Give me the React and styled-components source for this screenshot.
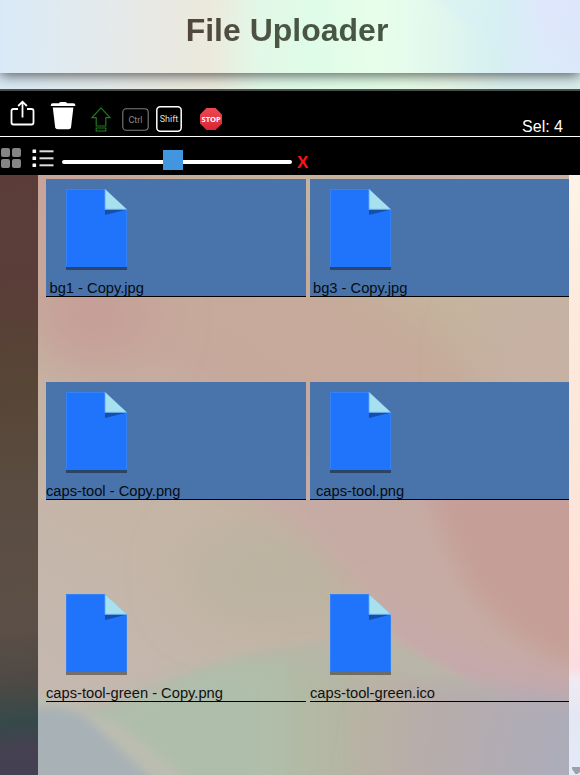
import React from "react";
import styled, { createGlobalStyle } from "styled-components";

const GlobalStyle = createGlobalStyle`
  * { box-sizing: border-box; }
  body {
    margin: 0;
    overflow: hidden;
    font-family: "Liberation Sans", Arial, sans-serif;
  }
`;

const Page = styled.div`
  display: flex;
  flex-direction: column;
  width: 580px;
  height: 775px;
  overflow: hidden;
  background: linear-gradient(94deg, #d9eaf7 0%, #e3eaec 17%, #e8e9e4 27%, #ece9dc 37%, #e0f9e9 46%, #dffde8 57%, #e4fde6 70%, #e6f6e6 77%, #d9f0ee 87%, #dbeeee 100%) 0 0 / 100% 91px no-repeat;
`;

const Header = styled.header`
  flex: none;
  height: 73px;
  margin-bottom: 16px;
  box-shadow: 0 2px 13px rgba(0, 0, 0, 0.66);
  clip-path: inset(0 0 -16px 0);
  background:
    linear-gradient(37deg, transparent 50%, rgba(214, 239, 245, 0.5) 56%, transparent 85%) 370px 0 / 210px 73px no-repeat,
    linear-gradient(92deg, #d9eaf7 0%, #e3eaec 16%, #e8e9e5 26%, #ece9dc 36%, #e3f7e7 44%, #defce8 54%, #e8feea 66%, #e1f7ee 76%, #d5eff2 86%, #dfe7fb 93%, #dce6fb 100%);
`;

const Title = styled.h1`
  margin: 0;
  padding-right: 6px;
  text-align: center;
  font-size: 32px;
  line-height: 60px;
  color: transparent;
  background: linear-gradient(90deg, #52463c 32%, #4b5543 48%, #455744 66%);
  background-clip: text;
`;

const Toolbar = styled.div`
  flex: none;
  display: flex;
  height: 48px;
  border-top: 2px solid #49504c;
  border-bottom: 1px solid #fff;
  background: #000;
`;

const ToolIcon = styled.svg`
  flex: none;
  display: block;
  width: ${(p) => p.$w}px;
  height: ${(p) => p.$h}px;
  margin: ${(p) => p.$top}px 0 0 ${(p) => p.$left}px;
`;

const Selection = styled.div`
  margin: 26px 17px 0 auto;
  font-size: 16px;
  line-height: 19px;
  color: #fff;
`;

const ViewBar = styled.div`
  flex: none;
  display: flex;
  height: 38px;
  background: #000;
`;

const Slider = styled.div`
  display: flex;
  align-items: center;
  width: 230px;
  height: 4px;
  margin: 23px 0 0 8px;
  padding-left: 101px;
  border-radius: 2px;
  background: #fff;
`;

const Thumb = styled.div`
  flex: none;
  width: 20px;
  height: 20px;
  margin: -10px 0;
  transform: translateY(-2px);
  background: #4196df;
`;

const Clear = styled.div`
  margin: 14px 0 0 5px;
  font: bold 17px/24px "Liberation Sans", Arial, sans-serif;
  color: #ff1212;
`;

const Workspace = styled.div`
  flex: none;
  display: flex;
  height: 600px;
`;

const Sidebar = styled.aside`
  width: 38px;
  background: linear-gradient(174deg, #5b3c39 0%, #5a3d38 18%, #574536 34%, #5a4c41 53%, #5c4f47 75%, #4e4945 84%, #36494a 91%, #454151 95%, #454052 100%);
`;

const FileArea = styled.main`
  position: relative;
  width: 531px;
  overflow: hidden;
  padding: 4px 0 0 8px;
`;

const Wallpaper = styled.svg`
  position: absolute;
  inset: 0;
  width: 531px;
  height: 600px;
`;

const FileGrid = styled.div`
  position: relative;
  display: grid;
  grid-template-columns: 260px 259px;
  grid-auto-rows: 202.67px;
  column-gap: 4px;
  align-items: start;
`;

const FileTile = styled.div`
  display: flex;
  flex-direction: column;
  height: 118px;
  padding-top: 10px;
  border-bottom: 1px solid #000;
  background: ${(p) => (p.$selected ? "#4874ab" : "transparent")};
`;

const FileGlyph = styled.svg`
  flex: none;
  display: block;
  width: 61px;
  height: 81px;
  margin-left: 20px;
`;

const FileName = styled.div`
  margin-top: 10px;
  padding-left: ${(p) => p.$indent}px;
  font-size: 14.7px;
  line-height: 17px;
  white-space: nowrap;
  color: ${(p) => (p.$selected ? "#050b14" : "#111")};
`;

const ScrollTrack = styled.div`
  display: flex;
  flex-direction: column;
  justify-content: flex-end;
  align-items: flex-end;
  width: 11px;
  padding-bottom: 1px;
  background: linear-gradient(180deg, #fef3e7 0%, #fdeadd 22%, #fbe6d8 50%, #ffe3d9 65%, #ffdede 77%, #fbdde0 82%, #f0eaf2 84%, #e4e8f4 90%, #e2e9f7 100%);
`;

const ScrollArrow = styled.svg`
  display: block;
  width: 8px;
  height: 7px;
`;

const files = [
  { name: "bg1 - Copy.jpg", selected: true, indent: 3.5 },
  { name: "bg3 - Copy.jpg", selected: true, indent: 3 },
  { name: "caps-tool - Copy.png", selected: true, indent: 0 },
  { name: "caps-tool.png", selected: true, indent: 6 },
  { name: "caps-tool-green - Copy.png", selected: false, indent: 0 },
  { name: "caps-tool-green.ico", selected: false, indent: 0 },
];

function ShareIcon() {
  return (
    <ToolIcon $w={26} $h={28} $left={9} $top={9} viewBox="0 0 26 28" fill="none" stroke="#fff">
      <path d="M9 9H4.5Q2.5 9 2.5 11V22.5Q2.5 24.5 4.5 24.5H22.5Q24.5 24.5 24.5 22.5V11Q24.5 9 22.5 9H18" strokeWidth="1.8" />
      <path d="M13.5 17.5V2.2M9.2 6L13.5 1.7L17.8 6" strokeWidth="1.8" />
    </ToolIcon>
  );
}

function TrashIcon() {
  return (
    <ToolIcon $w={26} $h={29} $left={15} $top={10} viewBox="0 0 26 29" fill="#fff">
      <path d="M.9 5V3.3Q1.3 2.4 3 2.2H9Q9.2 1 10.5.9H15.5Q16.8 1 17 2.2H23Q24.8 2.4 25.2 3.3V5Z" />
      <path d="M2.8 6.6H23.4L21 26.4Q20.7 28.2 18.7 28.2H7.6Q5.6 28.2 5.2 26.4Z" />
    </ToolIcon>
  );
}

function UpArrowIcon() {
  return (
    <ToolIcon $w={21} $h={26} $left={15} $top={15} viewBox="0 0 21 26" fill="none" stroke="#1d7b1d" strokeWidth="1.2">
      <path d="M10 1.8L19 11.6H14.8V20H5.2V11.6H1Z" />
      <path d="M5.2 22H14.8V25H5.2Z" />
    </ToolIcon>
  );
}

function KeyIcon({ label, color, stroke, size, left, top, w, h, text, textWidth }) {
  return (
    <ToolIcon $w={w} $h={h} $left={left} $top={top} viewBox={`0 0 ${w} ${h}`}>
      <rect x=".8" y=".8" width={w - 1.6} height={h - 1.6} rx="3.5" fill="none" stroke={color} strokeWidth={stroke} />
      <text
        x={w / 2}
        y={h / 2 + size * 0.35}
        textAnchor="middle"
        textLength={textWidth}
        lengthAdjust="spacingAndGlyphs"
        fontFamily="Roboto, sans-serif"
        fontSize={size}
        fill={text}
      >
        {label}
      </text>
    </ToolIcon>
  );
}

function StopIcon() {
  return (
    <ToolIcon $w={22} $h={22} $left={18} $top={17} viewBox="0 0 22 22">
      <defs>
        <linearGradient id="stopFill" x1="0" y1="0" x2="0" y2="1">
          <stop offset="0" stopColor="#ee4854" />
          <stop offset="1" stopColor="#d92433" />
        </linearGradient>
      </defs>
      <path d="M6.5 0H15.5L22 6.5V15.5L15.5 22H6.5L0 15.5V6.5Z" fill="url(#stopFill)" />
      <text x="11.2" y="13.7" textAnchor="middle" textLength="19.4" lengthAdjust="spacingAndGlyphs" fontFamily="Open Sans, sans-serif" fontWeight="700" fontSize="7.8" fill="#fff">
        STOP
      </text>
    </ToolIcon>
  );
}

function GridIcon() {
  return (
    <ToolIcon $w={20} $h={20} $left={1} $top={11} viewBox="0 0 20 20" fill="#858585">
      <rect x="0" y="0" width="9" height="9" rx="2" />
      <rect x="11" y="0" width="9" height="9" rx="2" />
      <rect x="0" y="11" width="9" height="9" rx="2" />
      <rect x="11" y="11" width="9" height="9" rx="2" />
    </ToolIcon>
  );
}

function ListIcon() {
  return (
    <ToolIcon $w={22} $h={19} $left={11} $top={11.5} viewBox="0 0 22 19" fill="#fff">
      {[0.5, 7.5, 14.5].map((y) => (
        <g key={y}>
          <rect x=".5" y={y} width="3.6" height="3.6" rx=".5" />
          <rect x="7.5" y={y + 0.8} width="14" height="2" fill="#ddd" />
        </g>
      ))}
    </ToolIcon>
  );
}

function FileIcon() {
  return (
    <FileGlyph viewBox="0 0 61 81">
      <path d="M0 78H61V81H0Z" fill="#000" fillOpacity=".4" />
      <path d="M0 0H39L61 21V78H0Z" fill="#2074fc" />
      <path d="M.5 77.5V.5H39M60.5 21V77.5" fill="none" stroke="#3c88f5" strokeWidth=".7" />
      <path d="M39 20.5H61L39 26Z" fill="#154fa7" />
      <path d="M39 0L61 20.5H39Z" fill="#a7e1f0" />
      <path d="M39 0V20.3H60.5" fill="none" stroke="#5daaf0" strokeWidth=".8" />
    </FileGlyph>
  );
}

function AbstractWallpaper() {
  return (
    <Wallpaper viewBox="0 0 531 600" preserveAspectRatio="none">
      <defs>
        <linearGradient id="base" gradientUnits="userSpaceOnUse" x1="60" y1="560" x2="420" y2="0">
          <stop offset="0" stopColor="#c4b8b0" />
          <stop offset=".2" stopColor="#c4b6aa" />
          <stop offset=".38" stopColor="#c5b4a4" />
          <stop offset=".55" stopColor="#c6a99c" />
          <stop offset=".74" stopColor="#c6aa9a" />
          <stop offset=".83" stopColor="#c5b49d" />
          <stop offset="1" stopColor="#c6b2a6" />
        </linearGradient>
        <linearGradient id="greenFade" gradientUnits="userSpaceOnUse" x1="60" y1="0" x2="430" y2="0">
          <stop offset="0" stopColor="#b0bcae" />
          <stop offset=".35" stopColor="#afbeaa" />
          <stop offset=".6" stopColor="#b3b8a4" />
          <stop offset=".8" stopColor="#bab0a4" />
          <stop offset="1" stopColor="#b4abae" />
        </linearGradient>
        <linearGradient id="lavender" gradientUnits="userSpaceOnUse" x1="320" y1="530" x2="520" y2="570">
          <stop offset="0" stopColor="#bbafa5" stopOpacity="0" />
          <stop offset=".5" stopColor="#b5acad" />
          <stop offset="1" stopColor="#adacb9" />
        </linearGradient>
        <filter id="soft4" x="-20%" y="-20%" width="140%" height="140%"><feGaussianBlur stdDeviation="5" /></filter>
        <filter id="soft12" x="-30%" y="-30%" width="160%" height="160%"><feGaussianBlur stdDeviation="11" /></filter>
        <filter id="soft20" x="-80%" y="-80%" width="260%" height="260%"><feGaussianBlur stdDeviation="26" /></filter>
      </defs>
      <rect width="531" height="600" fill="url(#base)" />
      <ellipse cx="55" cy="140" rx="60" ry="50" fill="#c69f97" filter="url(#soft20)" />
      <ellipse cx="20" cy="15" rx="55" ry="50" fill="#c7a39a" filter="url(#soft20)" />
      <ellipse cx="240" cy="400" rx="95" ry="50" fill="#bbb3a0" filter="url(#soft20)" />
      <ellipse cx="500" cy="190" rx="60" ry="80" fill="#c6b1a3" filter="url(#soft20)" />
      <path d="M170 290Q250 335 300 395T400 475Q470 525 560 550V280Z" fill="#c6aba4" filter="url(#soft12)" />
      <path d="M325 405Q390 465 460 480T560 500V560Q430 535 350 460Z" fill="#c6a9aa" filter="url(#soft12)" />
      <path d="M370 260Q400 350 430 410Q480 480 560 495V260Z" fill="#c59f97" filter="url(#soft12)" />
      <path d="M-10 560Q100 520 165 495T340 457Q430 510 550 560V620H-10Z" fill="#b8b6a8" filter="url(#soft4)" />
      <path d="M-10 555Q70 535 130 510T270 483Q400 510 550 560V620H-10Z" fill="url(#greenFade)" filter="url(#soft12)" />
      <path d="M50 542Q90 532 130 511T250 485V620H140Z" fill="#afbeaa" fillOpacity=".65" filter="url(#soft4)" />
      <path d="M300 505Q420 505 560 525V630H300Z" fill="url(#lavender)" filter="url(#soft12)" />
      <path d="M-10 515L35 530L80 548L170 620H-10Z" fill="#bbbdb1" filter="url(#soft4)" />
      <path d="M-10 535Q20 528 45 540L125 615H-10Z" fill="#a8b1b6" filter="url(#soft4)" />
    </Wallpaper>
  );
}

export default function App() {
  return (
    <>
      <GlobalStyle />
      <Page>
        <Header>
          <Title>File Uploader</Title>
        </Header>
        <Toolbar>
          <ShareIcon />
          <TrashIcon />
          <UpArrowIcon />
          <KeyIcon label="Ctrl" w={27} h={23} left={9.5} top={16.5} color="#7c7c7c" text="#8c8c8c" stroke={1.1} size={9} textWidth={14} />
          <KeyIcon label="Shift" w={26} h={26} left={7.5} top={15} color="#fff" text="#ddd" stroke={1.5} size={9.6} textWidth={18.5} />
          <StopIcon />
          <Selection>Sel: 4</Selection>
        </Toolbar>
        <ViewBar>
          <GridIcon />
          <ListIcon />
          <Slider>
            <Thumb />
          </Slider>
          <Clear>X</Clear>
        </ViewBar>
        <Workspace>
          <Sidebar />
          <FileArea>
            <AbstractWallpaper />
            <FileGrid>
              {files.map((file) => (
                <FileTile key={file.name} $selected={file.selected}>
                  <FileIcon />
                  <FileName $indent={file.indent} $selected={file.selected}>{file.name}</FileName>
                </FileTile>
              ))}
            </FileGrid>
          </FileArea>
          <ScrollTrack>
            <ScrollArrow viewBox="0 0 8 7">
              <path d="M0 0H8V5L5.5 7L3.5 7L0 2Z" fill="#9ba0aa" />
            </ScrollArrow>
          </ScrollTrack>
        </Workspace>
      </Page>
    </>
  );
}
